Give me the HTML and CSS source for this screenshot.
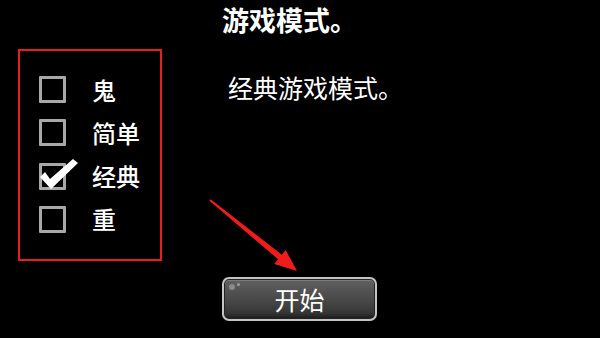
FILE: index.html
```html
<!DOCTYPE html>
<html lang="zh">
<head>
<meta charset="utf-8">
<link rel="stylesheet" href="styles.css">
</head>
<body>
<div class="screen">
  <h1 class="title">游戏模式。</h1>
  <div class="row">
    <div class="panel">
      <div class="opt"><span class="box"></span><span class="label">鬼</span></div>
      <div class="opt"><span class="box"></span><span class="label">简单</span></div>
      <div class="opt"><span class="box checked"><svg class="check" width="40" height="30" viewBox="0 -4 40 30"><polygon points="1,14 6,9 11,16 34,-4 39,0 12,26" fill="#fff"/></svg></span><span class="label">经典</span></div>
      <div class="opt"><span class="box"></span><span class="label">重</span></div>
    </div>
    <p class="desc">经典游戏模式。</p>
  </div>
  <div class="btn-row">
    <button class="start">开始</button>
  </div>
  <svg class="arrow" width="600" height="338" viewBox="0 0 600 338">
    <polygon points="210.6,199.2 281.9,254.7 285.7,250 297,271 274.3,264 278.1,259.3 209.4,200.8" fill="#f01c1c"/>
  </svg>
</div>
</body>
</html>
```
FILE: styles.css
```css
* { box-sizing: border-box; }
html, body { margin: 0; padding: 0; background: #000; }
.screen {
  position: relative;
  width: 600px;
  height: 338px;
  overflow: hidden;
  background: #000;
  color: #fff;
  font-family: "Noto Sans CJK SC", "Noto Sans", sans-serif;
}
.title {
  margin: 0;
  padding: 6px 0 0 222px;
  font-size: 27px;
  line-height: 27px;
  font-weight: 700;
  height: 49px;
}
.row {
  display: flex;
  align-items: flex-start;
}
.panel {
  margin-left: 18px;
  width: 144px;
  height: 212px;
  border: 2px solid #e81e1e;
  padding: 25px 0 0 19px;
  display: flex;
  flex-direction: column;
  gap: 16.3px;
}
.opt {
  display: flex;
  align-items: center;
  gap: 26px;
  height: 27px;
}
.box {
  position: relative;
  width: 27px;
  height: 27px;
  border: 3px solid #a8a8a8;
  border-radius: 1px;
  flex: none;
}
.check {
  position: absolute;
  left: -3px;
  top: -7px;
  overflow: visible;
}
.label {
  font-size: 24px;
  line-height: 26px;
  font-weight: 500;
}
.desc {
  margin: 24px 0 0 66px;
  font-size: 25px;
  line-height: 28px;
}
.btn-row {
  padding: 16px 0 0 222px;
}
.start {
  position: relative;
  width: 155px;
  height: 44px;
  border: 2px solid #c4c4c4;
  border-radius: 7px;
  background: linear-gradient(#626262 0%, #505050 35%, #424242 65%, #353535 85%, #1a1a1a 100%);
  box-shadow: inset 0 0 0 1px #222, inset 0 1px 0 1px #7a7a7a;
  color: #fff;
  font-family: "Noto Sans CJK SC", "Noto Sans", sans-serif;
  font-size: 25px;
  line-height: 40px;
  padding: 0;
  letter-spacing: 0;
}
.start::before,
.start::after {
  content: "";
  position: absolute;
  border-radius: 50%;
  background: #8a8a8a;
}
.start::before { left: 5px; top: 5px; width: 6px; height: 6px; }
.start::after { left: 13px; top: 4px; width: 3px; height: 3px; background: #9a9a9a; }
.arrow {
  position: absolute;
  left: 0;
  top: 0;
  pointer-events: none;
}
```
